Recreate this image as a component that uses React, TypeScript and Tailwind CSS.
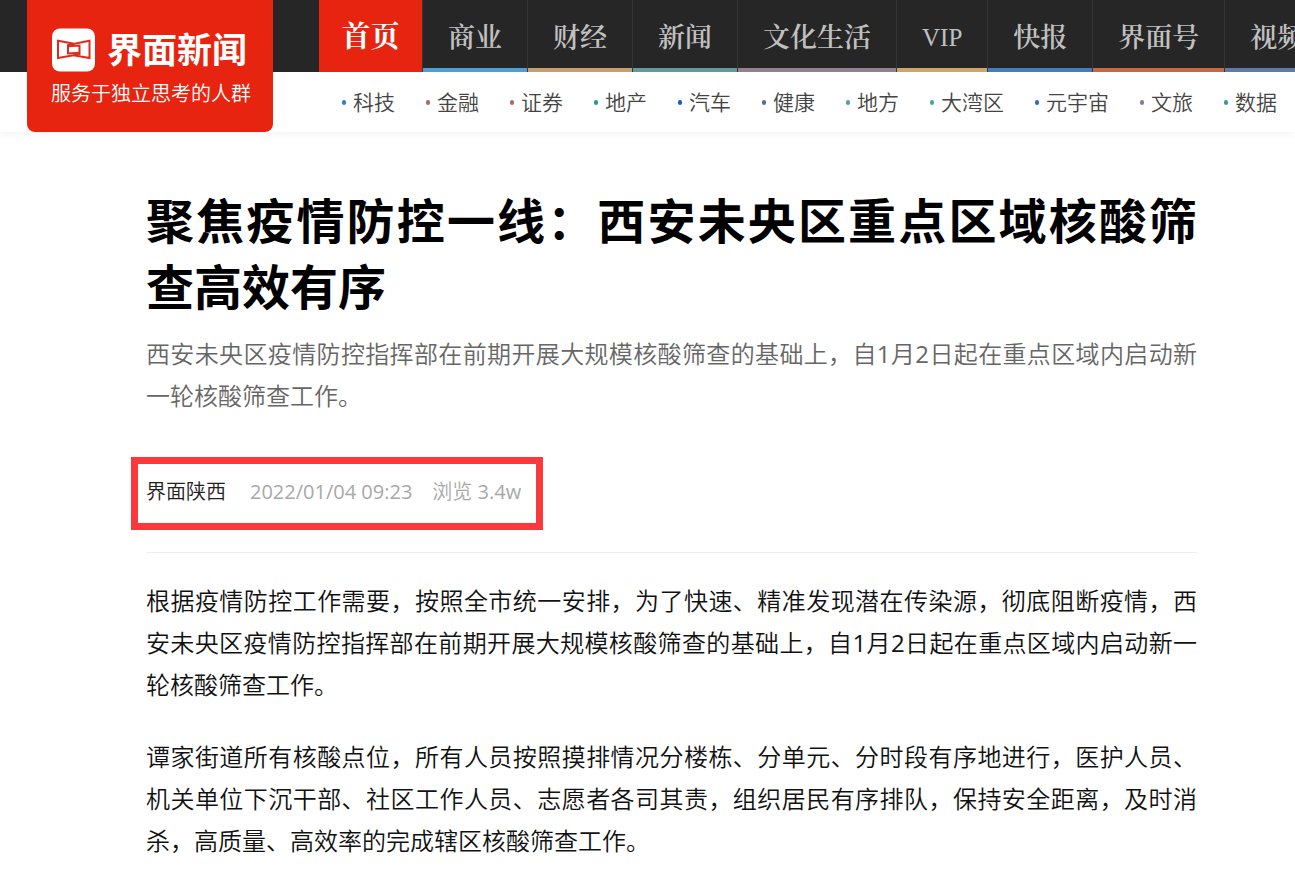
const channels = [
  { label: '商业', bar: 'border-b-[#4f9fd4]', size: 'text-[27px] font-semibold' },
  { label: '财经', bar: 'border-b-[#c5a06f]', size: 'text-[27px] font-semibold' },
  { label: '新闻', bar: 'border-b-[#66999b]', size: 'text-[27px] font-semibold' },
  { label: '文化生活', bar: 'border-b-[#94808f]', size: 'text-[27px] font-semibold' },
  { label: 'VIP', bar: 'border-b-[#cda66c]', size: 'text-[25px] font-normal' },
  { label: '快报', bar: 'border-b-[#457ebb]', size: 'text-[27px] font-semibold' },
  { label: '界面号', bar: 'border-b-[#c56a45]', size: 'text-[27px] font-semibold' },
  { label: '视频', bar: 'border-b-[#5d7ba5]', size: 'text-[27px] font-semibold' },
];

const topics = [
  { label: '科技', dot: 'bg-[#2b7fc4]' },
  { label: '金融', dot: 'bg-[#a86b6b]' },
  { label: '证券', dot: 'bg-[#a86b6b]' },
  { label: '地产', dot: 'bg-[#1f9a9c]' },
  { label: '汽车', dot: 'bg-[#1d5bc4]' },
  { label: '健康', dot: 'bg-[#5468a8]' },
  { label: '地方', dot: 'bg-[#4ba39a]' },
  { label: '大湾区', dot: 'bg-[#4ba39a]' },
  { label: '元宇宙', dot: 'bg-[#2e6db0]' },
  { label: '文旅', dot: 'bg-[#8c7a95]' },
  { label: '数据', dot: 'bg-[#339c9f]' },
];

const summary =
  '西安未央区疫情防控指挥部在前期开展大规模核酸筛查的基础上，自1月2日起在重点区域内启动新一轮核酸筛查工作。';

const paragraphs = [
  '根据疫情防控工作需要，按照全市统一安排，为了快速、精准发现潜在传染源，彻底阻断疫情，西安未央区疫情防控指挥部在前期开展大规模核酸筛查的基础上，自1月2日起在重点区域内启动新一轮核酸筛查工作。',
  '谭家街道所有核酸点位，所有人员按照摸排情况分楼栋、分单元、分时段有序地进行，医护人员、机关单位下沉干部、社区工作人员、志愿者各司其责，组织居民有序排队，保持安全距离，及时消杀，高质量、高效率的完成辖区核酸筛查工作。',
];

// Digits are set one step heavier so they keep the same colour as the Chinese text.
function Prose({ text }: { text: string }) {
  return (
    <>
      {text.split(/(\d+)/).map((part, i) =>
        i % 2 === 1 ? (
          <span key={i} className="font-normal">
            {part}
          </span>
        ) : (
          part
        ),
      )}
    </>
  );
}

function Logo() {
  return (
    <a
      href="#"
      className="absolute left-[27px] top-0 z-10 flex h-[132px] w-[246px] flex-col rounded-b-lg bg-[#e72410] pl-6 pt-7 text-white"
    >
      <span className="flex items-center gap-3">
        <svg viewBox="0 0 44 44" className="size-11 shrink-0" aria-hidden="true">
          <rect x="1" y="0.5" width="43" height="43" rx="8" fill="#fff" />
          <g fill="none" stroke="#dd2c1c" strokeWidth="2">
            <path d="M23 15.700 7 12.800V30L28.500 26.200V17.500L17 18.300" />
            <path d="M22.500 27.300 38.500 30V12.800L17 17V25.500L28.500 24.700" />
          </g>
        </svg>
        <span className="whitespace-nowrap text-[35px] font-bold leading-[44px]">界面新闻</span>
      </span>
      <span className="mt-2 whitespace-nowrap text-[20px] font-[350] leading-[28px]">服务于独立思考的人群</span>
    </a>
  );
}

export default function App() {
  return (
    <div
      lang="zh-CN"
      className="min-h-screen overflow-x-hidden bg-white font-['Open_Sans','Noto_Sans_CJK_SC',sans-serif]"
    >
      <header className="relative shadow-[0_2px_8px_rgba(0,0,0,0.05)]">
        <Logo />
        <nav
          aria-label="频道"
          className="flex h-[72px] overflow-hidden whitespace-nowrap bg-[#262626] pl-[319px] font-['Liberation_Serif','Noto_Serif_CJK_SC','Noto_Sans_CJK_SC',serif]"
        >
          <a
            href="#"
            className="flex h-full w-[103px] shrink-0 items-center justify-center bg-[#e72410] pt-1 text-[29px] font-bold text-white"
          >
            首页
          </a>
          {channels.map((c) => (
            <a
              key={c.label}
              href="#"
              className={`flex h-full shrink-0 border-l border-l-[#363636] text-[#c0c0c0] ${c.size}`}
            >
              <span className={`flex items-center border-b-4 px-[25px] pt-2 ${c.bar}`}>{c.label}</span>
            </a>
          ))}
        </nav>
        <nav
          aria-label="栏目"
          className="flex h-[60px] items-center gap-[31px] overflow-hidden whitespace-nowrap bg-white pl-[342px]"
        >
          {topics.map((t) => (
            <a
              key={t.label}
              href="#"
              className="flex shrink-0 items-center gap-[7px] text-[21px] font-[350] leading-[30px] text-[#444]"
            >
              <span className={`h-[5px] w-1 rounded-full ${t.dot}`} />
              {t.label}
            </a>
          ))}
        </nav>
      </header>

      <main className="pl-[146px] pr-[98px] pt-14">
        <article>
          <h1 className="text-justify text-[48px] font-bold leading-[66px] text-black">
            聚焦疫情防控一线：西安未央区重点区域核酸筛查高效有序
          </h1>
          <p className="mt-[13px] text-justify text-[24px] font-[350] leading-[42px] text-[#666]">
            <Prose text={summary} />
          </p>
          <div className="-ml-[15px] mt-10 flex h-[73px] w-[412px] items-center whitespace-nowrap border-[7px] border-[#fb383c] pb-1 pl-2 text-[20px] font-[350] text-[#a8a8a8]">
            <a href="#" className="text-[#222]">界面陕西</a>
            <time dateTime="2022-01-04T09:23" className="ml-6 font-normal">2022/01/04 09:23</time>
            <span className="ml-5">
              浏览 <span className="font-normal">3.4w</span>
            </span>
          </div>
          <hr className="mt-[22px] border-[#eee]" />
          <div className="mt-[27px] flex flex-col gap-[30px] pb-[21px]">
            {paragraphs.map((p) => (
              <p key={p} className="text-justify text-[24px] font-[350] leading-[42px] text-[#111]">
                <Prose text={p} />
              </p>
            ))}
          </div>
        </article>
      </main>
    </div>
  );
}
